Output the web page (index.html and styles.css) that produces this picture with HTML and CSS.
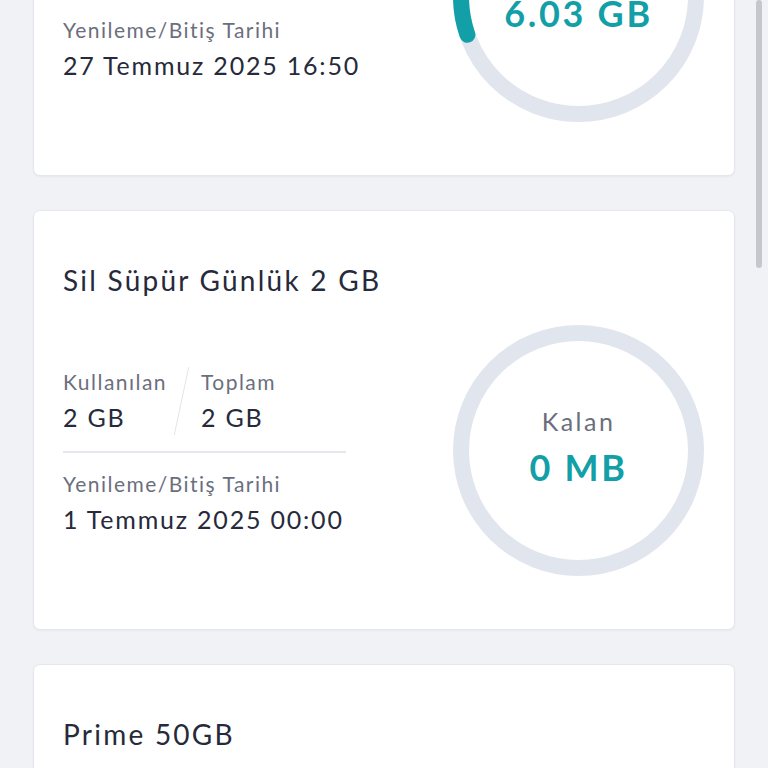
FILE: index.html
```html
<!DOCTYPE html>
<html lang="tr">
<head>
    <meta charset="UTF-8">
    <meta name="viewport" content="width=device-width, initial-scale=1.0">
    <title>Paketlerim</title>
    <link rel="stylesheet" href="styles.css">
</head>
<body>
    <div class="scroll-thumb"></div>

    <div class="package-list">
        <!-- Paket 1 -->
        <div class="package-card">
            <h2 class="package-title">Süper Paket 20 GB</h2>
            <div class="package-body">
                <div class="package-info">
                    <div class="usage-row">
                        <div class="usage-col">
                            <div class="label">Kullanılan</div>
                            <div class="value">13.97 GB</div>
                        </div>
                        <div class="usage-sep"></div>
                        <div class="usage-col">
                            <div class="label">Toplam</div>
                            <div class="value">20 GB</div>
                        </div>
                    </div>
                    <div class="divider"></div>
                    <div class="label">Yenileme/Bitiş Tarihi</div>
                    <div class="value">27 Temmuz 2025 16:50</div>
                </div>
                <div class="ring">
                    <svg class="ring-svg" viewBox="0 0 251 251" width="251" height="251">
                        <circle class="ring-track" cx="125.5" cy="125.5" r="117.5"></circle>
                        <circle class="ring-fill" cx="125.5" cy="125.5" r="117.5"
                                stroke-dasharray="223.5 738.3" transform="rotate(161 125.5 125.5)"></circle>
                    </svg>
                    <div class="ring-text">
                        <div class="ring-label">Kalan</div>
                        <div class="ring-value">6.03 GB</div>
                    </div>
                </div>
            </div>
        </div>

        <!-- Paket 2 -->
        <div class="package-card">
            <h2 class="package-title">Sil Süpür Günlük 2 GB</h2>
            <div class="package-body">
                <div class="package-info">
                    <div class="usage-row">
                        <div class="usage-col">
                            <div class="label">Kullanılan</div>
                            <div class="value">2 GB</div>
                        </div>
                        <div class="usage-sep"></div>
                        <div class="usage-col">
                            <div class="label">Toplam</div>
                            <div class="value">2 GB</div>
                        </div>
                    </div>
                    <div class="divider"></div>
                    <div class="label">Yenileme/Bitiş Tarihi</div>
                    <div class="value">1 Temmuz 2025 00:00</div>
                </div>
                <div class="ring">
                    <svg class="ring-svg" viewBox="0 0 251 251" width="251" height="251">
                        <circle class="ring-track" cx="125.5" cy="125.5" r="117.5"></circle>
                    </svg>
                    <div class="ring-text">
                        <div class="ring-label">Kalan</div>
                        <div class="ring-value">0 MB</div>
                    </div>
                </div>
            </div>
        </div>

        <!-- Paket 3 -->
        <div class="package-card">
            <h2 class="package-title">Prime 50GB</h2>
            <div class="package-body">
                <div class="package-info">
                    <div class="usage-row">
                        <div class="usage-col">
                            <div class="label">Kullanılan</div>
                            <div class="value">12 GB</div>
                        </div>
                        <div class="usage-sep"></div>
                        <div class="usage-col">
                            <div class="label">Toplam</div>
                            <div class="value">50 GB</div>
                        </div>
                    </div>
                    <div class="divider"></div>
                    <div class="label">Yenileme/Bitiş Tarihi</div>
                    <div class="value">5 Temmuz 2025 09:15</div>
                </div>
                <div class="ring">
                    <svg class="ring-svg" viewBox="0 0 251 251" width="251" height="251">
                        <circle class="ring-track" cx="125.5" cy="125.5" r="117.5"></circle>
                    </svg>
                    <div class="ring-text">
                        <div class="ring-label">Kalan</div>
                        <div class="ring-value">38 GB</div>
                    </div>
                </div>
            </div>
        </div>
    </div>
</body>
</html>
```

FILE: styles.css
```css
html, body {
    height: 100%;
    overflow: hidden;
}
body {
    margin: 0;
    background: #f1f2f6;
    font-family: 'Lato', 'Noto Sans', sans-serif;
    color: #262a3b;
}
.scroll-thumb {
    position: fixed;
    top: 0;
    right: 6px;
    width: 6px;
    height: 268px;
    border-radius: 3px;
    background: #c6c7cc;
}
/* sayfa kaydırılmış görünüm: ilk kart üstte kesik */
.package-list {
    margin-top: -244px;
    padding: 0 33px;
    display: flex;
    flex-direction: column;
    gap: 34px;
}
.package-card {
    box-sizing: border-box;
    height: 420px;
    background: #fff;
    border: 1px solid #e5e7ee;
    border-radius: 7px;
    box-shadow: 0 1px 2px rgba(30, 40, 70, 0.05);
    padding: 49px 30px 0 29px;
}
.package-title {
    margin: 0;
    font-size: 28px;
    line-height: 40px;
    font-weight: 400;
    letter-spacing: 0.08em;
    color: #262a3b;
}
.package-body {
    display: flex;
    align-items: center;
    justify-content: space-between;
    margin-top: 25px;
}
.package-info {
    width: 283px;
}
.usage-row {
    display: flex;
    align-items: stretch;
}
.usage-col {
    width: 118px;
}
.usage-sep {
    width: 1px;
    margin: 2px 19px 0 0;
    background: #e2e4ea;
    transform: skewX(-12deg);
}
.label {
    font-size: 21px;
    line-height: 34px;
    letter-spacing: 0.07em;
    color: #6b6f7d;
    white-space: nowrap;
}
.value {
    font-size: 25px;
    line-height: 36px;
    letter-spacing: 0.072em;
    color: #262a3b;
    white-space: nowrap;
}
.divider {
    height: 2px;
    background: #e6e8ee;
    margin: 16px 0 14px;
}
.ring {
    position: relative;
    width: 251px;
    height: 251px;
}
.ring-svg {
    display: block;
}
.ring-track {
    fill: none;
    stroke: #e1e5ee;
    stroke-width: 16;
}
.ring-fill {
    fill: none;
    stroke: #139fa7;
    stroke-width: 16;
    stroke-linecap: round;
}
.ring-text {
    position: absolute;
    inset: 0;
    display: flex;
    flex-direction: column;
    align-items: center;
    justify-content: center;
}
.ring-label {
    font-size: 25px;
    line-height: 32px;
    letter-spacing: 0.1em;
    color: #6b6f7d;
}
.ring-value {
    font-size: 36px;
    line-height: 60px;
    font-weight: 700;
    letter-spacing: 0.075em;
    color: #139fa7;
}
```
